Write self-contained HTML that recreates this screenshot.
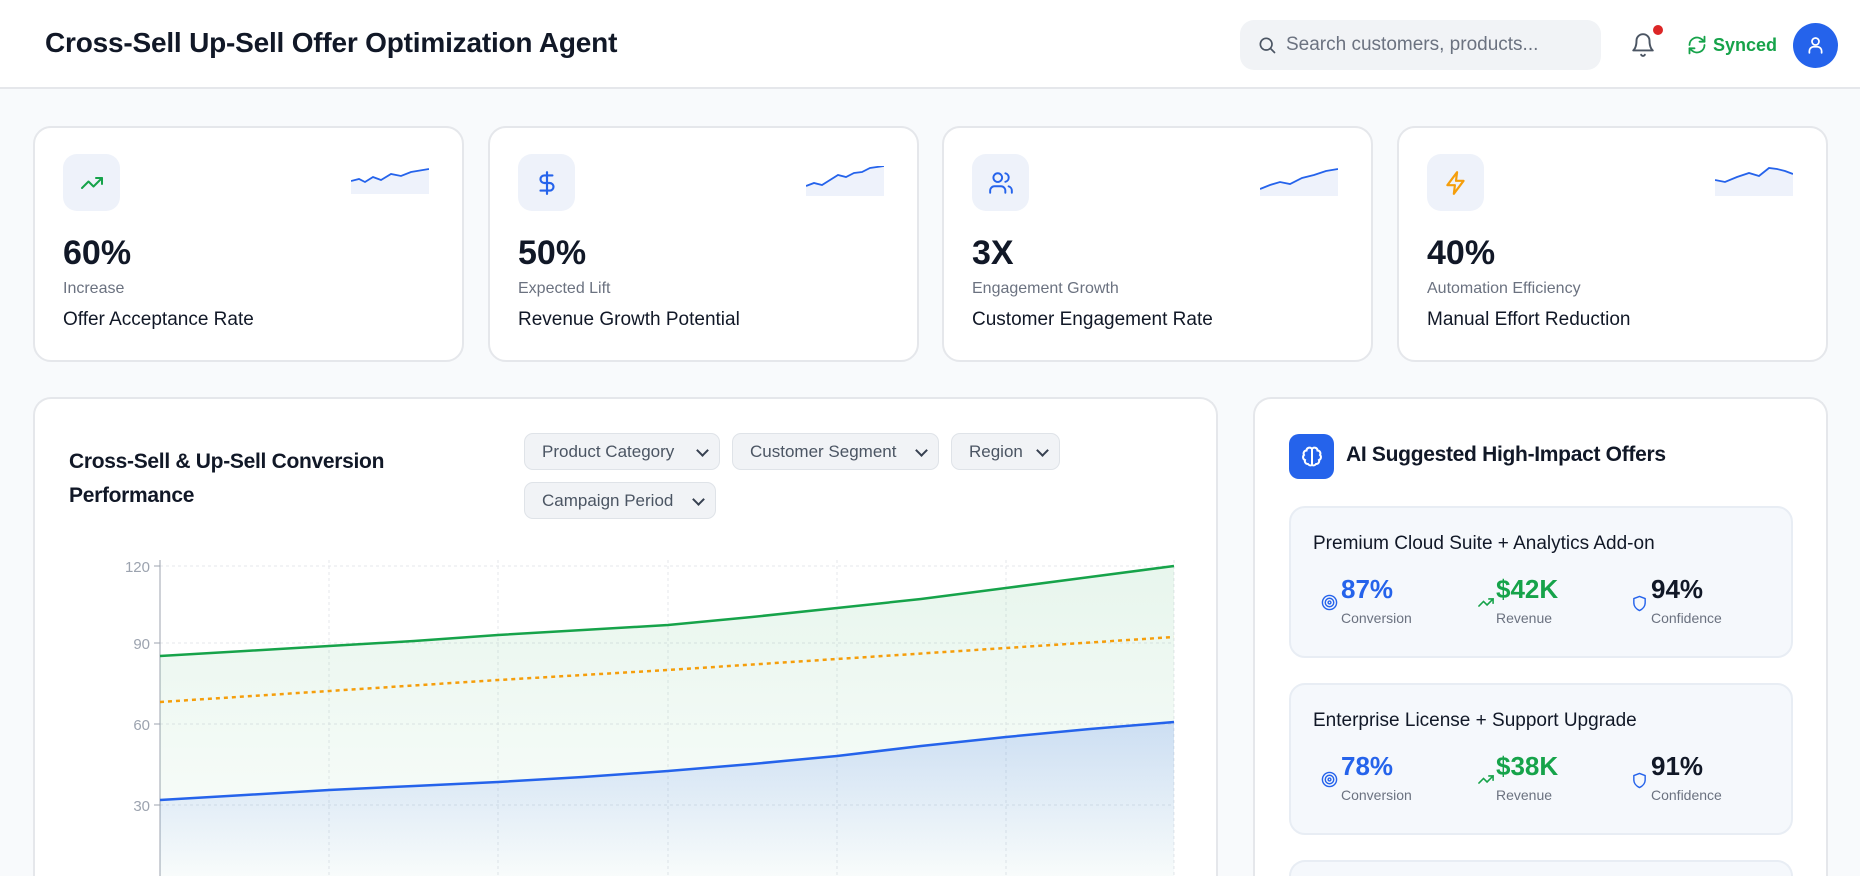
<!DOCTYPE html>
<html style="overflow:hidden;height:876px"><head><meta charset="utf-8"><style>
*{box-sizing:border-box;margin:0;padding:0}
html,body{overflow:hidden}
body{width:1860px;height:876px;background:#f8fafc;font-family:"Liberation Sans",sans-serif;color:#111827;position:relative}
#wrap{position:absolute;left:0;top:0;width:1860px;height:876px;overflow:hidden}
.hdr{position:absolute;left:0;top:0;width:1860px;height:89px;background:#fff;border-bottom:2px solid #e5e7eb}
.title{position:absolute;left:45px;top:27px;font-size:28px;font-weight:bold;color:#111827;letter-spacing:-0.2px}
.search{position:absolute;left:1240px;top:20px;width:361px;height:50px;background:#f1f3f6;border-radius:14px}
.search span{position:absolute;left:46px;top:14px;font-size:19px;color:#6b7280}
.card{position:absolute;background:#fff;border:2px solid #e5e7eb;border-radius:18px}
.kpi{top:126px;width:431px;height:236px}
.ib{position:absolute;left:28px;top:26px;width:57px;height:57px;border-radius:14px;background:#eef2fa;display:flex;align-items:center;justify-content:center}
.num{position:absolute;left:28px;top:106px;font-size:34px;font-weight:bold;color:#111827}
.sub{position:absolute;left:28px;top:152px;font-size:16px;color:#6b7280}
.lab{position:absolute;left:28px;top:181px;font-size:19px;color:#111827}
.spark{position:absolute;left:316px;top:38px}
.dd{position:absolute;height:37px;background:#f1f3f6;border:1px solid #dfe3e8;border-radius:9px;font-size:17px;color:#4b5563;padding:8px 0 0 17px}
.dd:after{content:"";position:absolute;right:12px;top:12px;width:7px;height:7px;border-right:2px solid #374151;border-bottom:2px solid #374151;transform:rotate(45deg)}
.offer{position:absolute;left:34px;width:504px;height:152px;background:#f5f8fc;border:2px solid #e8edf4;border-radius:16px}
.ot{position:absolute;left:22px;top:25px;font-size:19px;color:#111827}
.st{position:absolute;top:66px}
.st b{position:absolute;left:20px;top:0;font-size:26px;white-space:nowrap}
.st i{position:absolute;left:20px;top:36px;font-style:normal;font-size:14px;color:#6b7280;white-space:nowrap}
.st svg{position:absolute;left:0;top:20px}
</style></head><body><div id="wrap">
<div class="hdr">
<div class="title">Cross-Sell Up-Sell Offer Optimization Agent</div>
<div class="search"><svg style="position:absolute;left:17px;top:15px" width="20" height="20" viewBox="0 0 24 24" fill="none" stroke="#4b5563" stroke-width="2" stroke-linecap="round"><circle cx="11" cy="11" r="7"/><path d="M21 21l-4.5-4.5"/></svg><span>Search customers, products...</span></div>
<svg style="position:absolute;left:1630px;top:31px" width="26" height="28" viewBox="0 0 24 24" fill="none" stroke="#4b5563" stroke-width="1.8" stroke-linecap="round" stroke-linejoin="round"><path d="M6 8a6 6 0 0 1 12 0c0 7 3 9 3 9H3s3-2 3-9"/><path d="M10.3 21a1.9 1.9 0 0 0 3.4 0"/></svg>
<div style="position:absolute;left:1653px;top:25px;width:10px;height:10px;border-radius:50%;background:#dc2626"></div>
<svg style="position:absolute;left:1687px;top:35px" width="20" height="20" viewBox="0 0 24 24" fill="none" stroke="#16a34a" stroke-width="2.2" stroke-linecap="round" stroke-linejoin="round"><path d="M21 2v6h-6"/><path d="M3 12a9 9 0 0 1 15-6.7L21 8"/><path d="M3 22v-6h6"/><path d="M21 12a9 9 0 0 1-15 6.7L3 16"/></svg>
<div style="position:absolute;left:1713px;top:35px;font-size:18px;font-weight:bold;color:#16a34a">Synced</div>
<div style="position:absolute;left:1793px;top:23px;width:45px;height:45px;border-radius:50%;background:#2563eb"></div>
<svg style="position:absolute;left:1805px;top:34px" width="21" height="22" viewBox="0 0 24 24" fill="none" stroke="#fff" stroke-width="2" stroke-linecap="round"><circle cx="12" cy="8" r="4"/><path d="M5 21v-2a5 5 0 0 1 5-5h4a5 5 0 0 1 5 5v2"/></svg>
</div>

<div class="card kpi" style="left:33px"><div class="ib"><svg width="24" height="24" viewBox="0 0 24 24" fill="none" stroke="#16a34a" stroke-width="2" stroke-linecap="round" stroke-linejoin="round"><path d="M22 7l-8.5 8.5-5-5L2 17"/><path d="M16 7h6v6"/></svg></div>
<svg class="spark" width="78" height="28" viewBox="0 0 78 28"><path d="M0 15 L8 13 L14 16 L22 11 L30 14 L40 8 L50 10 L60 6 L78 3 L78 28 L0 28Z" fill="#eef2fb"/><path d="M0 15 L8 13 L14 16 L22 11 L30 14 L40 8 L50 10 L60 6 L78 3" fill="none" stroke="#2563eb" stroke-width="1.8"/></svg>
<div class="num">60%</div><div class="sub">Increase</div><div class="lab">Offer Acceptance Rate</div></div>

<div class="card kpi" style="left:488px"><div class="ib"><svg width="26" height="28" viewBox="0 0 24 24" fill="none" stroke="#2563eb" stroke-width="2" stroke-linecap="round"><path d="M12 2v20"/><path d="M17 5H9.5a3.5 3.5 0 0 0 0 7h5a3.5 3.5 0 0 1 0 7H6"/></svg></div>
<svg class="spark" width="78" height="30" viewBox="0 0 78 30"><path d="M0 20 L8 17 L16 19 L24 14 L32 9 L40 11 L48 7 L56 6 L64 2 L78 0 L78 30 L0 30Z" fill="#eef2fb"/><path d="M0 20 L8 17 L16 19 L24 14 L32 9 L40 11 L48 7 L56 6 L64 2 L78 0" fill="none" stroke="#2563eb" stroke-width="1.8"/></svg>
<div class="num">50%</div><div class="sub">Expected Lift</div><div class="lab">Revenue Growth Potential</div></div>

<div class="card kpi" style="left:942px"><div class="ib"><svg width="26" height="26" viewBox="0 0 24 24" fill="none" stroke="#2563eb" stroke-width="1.8" stroke-linecap="round"><circle cx="9" cy="7" r="4"/><path d="M2 21v-2a4 4 0 0 1 4-4h6a4 4 0 0 1 4 4v2"/><path d="M16 3.1a4 4 0 0 1 0 7.8"/><path d="M22 21v-2a4 4 0 0 0-3-3.9"/></svg></div>
<svg class="spark" width="78" height="30" viewBox="0 0 78 30"><path d="M0 23 L10 19 L20 16 L30 18 L42 12 L54 9 L66 5 L78 3 L78 30 L0 30Z" fill="#eef2fb"/><path d="M0 23 L10 19 L20 16 L30 18 L42 12 L54 9 L66 5 L78 3" fill="none" stroke="#2563eb" stroke-width="1.8"/></svg>
<div class="num">3X</div><div class="sub">Engagement Growth</div><div class="lab">Customer Engagement Rate</div></div>

<div class="card kpi" style="left:1397px"><div class="ib"><svg width="26" height="28" viewBox="0 0 24 24" fill="none" stroke="#f59e0b" stroke-width="2" stroke-linejoin="round"><path d="M13 2L4 14h7l-1 8 9-12h-7z"/></svg></div>
<svg class="spark" width="78" height="30" viewBox="0 0 78 30"><path d="M0 14 L10 16 L22 11 L34 7 L44 10 L54 2 L62 3 L70 5 L78 8 L78 30 L0 30Z" fill="#eef2fb"/><path d="M0 14 L10 16 L22 11 L34 7 L44 10 L54 2 L62 3 L70 5 L78 8" fill="none" stroke="#2563eb" stroke-width="1.8"/></svg>
<div class="num">40%</div><div class="sub">Automation Efficiency</div><div class="lab">Manual Effort Reduction</div></div>

<div class="card" style="left:33px;top:397px;width:1185px;height:479px;border-bottom:none;border-radius:18px 18px 0 0">
<div style="position:absolute;left:34px;top:46px;font-size:21px;line-height:34px;color:#111827;font-weight:bold;letter-spacing:-0.3px">Cross-Sell &amp; Up-Sell Conversion<br>Performance</div>
<div class="dd" style="left:489px;top:34px;width:196px">Product Category</div>
<div class="dd" style="left:697px;top:34px;width:207px">Customer Segment</div>
<div class="dd" style="left:916px;top:34px;width:109px">Region</div>
<div class="dd" style="left:489px;top:83px;width:192px">Campaign Period</div>
</div>

<svg style="position:absolute;left:0;top:0" width="1230" height="876">
<defs>
<linearGradient id="gg" x1="0" y1="0" x2="0" y2="1"><stop offset="0" stop-color="#16a34a" stop-opacity=".1"/><stop offset="1" stop-color="#16a34a" stop-opacity=".02"/></linearGradient>
<linearGradient id="bg" x1="0" y1="0" x2="0" y2="1"><stop offset="0" stop-color="#2563eb" stop-opacity=".18"/><stop offset="1" stop-color="#2563eb" stop-opacity=".01"/></linearGradient>
</defs>
<g stroke="#e5e7eb" stroke-width="1" stroke-dasharray="3 3">
<path d="M160 566H1174M160 643H1174M160 724H1174M160 805H1174"/>
<path d="M329 560V876M498 560V876M668 560V876M837 560V876M1006 560V876M1174 560V876"/>
</g>
<path d="M160 560V876" stroke="#9ca3af" stroke-width="1"/>
<path d="M154 566H160M154 643H160M154 724H160M154 805H160" stroke="#9ca3af"/>
<g font-size="15" fill="#9ca3af" text-anchor="end"><text x="150" y="572">120</text><text x="150" y="649">90</text><text x="150" y="730">60</text><text x="150" y="811">30</text></g>
<path d="M160 656 L245 651 L329 646 L414 641 L498 635 L583 630 L668 625 L752 617 L837 608 L921 599 L1006 588 L1090 577 L1174 566 L1174 876 L160 876Z" fill="url(#gg)"/>
<path d="M160 800 L245 795 L329 790 L414 786 L498 782 L583 777 L668 771 L752 764 L837 756 L921 746 L1006 737 L1090 729 L1174 722 L1174 876 L160 876Z" fill="url(#bg)"/>
<polyline points="160,656 245,651 329,646 414,641 498,635 583,630 668,625 752,617 837,608 921,599 1006,588 1090,577 1174,566" fill="none" stroke="#16a34a" stroke-width="2.5" stroke-linejoin="round"/>
<path d="M160 702 L329 691 L498 680 L668 670 L837 659 L1006 648 L1174 637" fill="none" stroke="#f59e0b" stroke-width="2.5" stroke-dasharray="4 4"/>
<polyline points="160,800 245,795 329,790 414,786 498,782 583,777 668,771 752,764 837,756 921,746 1006,737 1090,729 1174,722" fill="none" stroke="#2563eb" stroke-width="2.5" stroke-linejoin="round"/>
</svg>

<div class="card" style="left:1253px;top:397px;width:575px;height:479px;border-bottom:none;border-radius:18px 18px 0 0">
<div style="position:absolute;left:34px;top:35px;width:45px;height:45px;border-radius:10px;background:#2563eb;display:flex;align-items:center;justify-content:center"><svg width="24" height="24" viewBox="0 0 24 24" fill="none" stroke="#fff" stroke-width="2" stroke-linecap="round"><path d="M12 4a3 3 0 0 0-5.5 1.5A3 3 0 0 0 4 10a3 3 0 0 0 1 5 3 3 0 0 0 3 4 3 3 0 0 0 4 1z"/><path d="M12 4a3 3 0 0 1 5.5 1.5A3 3 0 0 1 20 10a3 3 0 0 1-1 5 3 3 0 0 1-3 4 3 3 0 0 1-4 1z"/><path d="M12 4v16"/></svg></div>
<div style="position:absolute;left:91px;top:44px;font-size:21px;font-weight:bold;letter-spacing:-0.3px;color:#111827">AI Suggested High-Impact Offers</div>
<div class="offer" style="top:107px"><div class="ot">Premium Cloud Suite + Analytics Add-on</div>
<div class="st" style="left:30px"><svg width="17" height="17" viewBox="0 0 24 24" fill="none" stroke="#2563eb" stroke-width="2"><circle cx="12" cy="12" r="10"/><circle cx="12" cy="12" r="6"/><circle cx="12" cy="12" r="2"/></svg><b style="color:#2563eb">87%</b><i>Conversion</i></div>
<div class="st" style="left:185px"><svg width="20" height="17" viewBox="0 0 24 24" fill="none" stroke="#16a34a" stroke-width="2.2" stroke-linecap="round"><path d="M22 7l-8.5 8.5-5-5L2 17"/><path d="M16 7h6v6"/></svg><b style="color:#16a34a">$42K</b><i>Revenue</i></div>
<div class="st" style="left:340px"><svg width="17" height="19" viewBox="0 0 24 24" fill="none" stroke="#2563eb" stroke-width="2" stroke-linejoin="round"><path d="M12 2l8 3v6c0 5-3.5 9-8 11-4.5-2-8-6-8-11V5z"/></svg><b style="color:#111827">94%</b><i>Confidence</i></div></div>
<div class="offer" style="top:284px"><div class="ot">Enterprise License + Support Upgrade</div>
<div class="st" style="left:30px"><svg width="17" height="17" viewBox="0 0 24 24" fill="none" stroke="#2563eb" stroke-width="2"><circle cx="12" cy="12" r="10"/><circle cx="12" cy="12" r="6"/><circle cx="12" cy="12" r="2"/></svg><b style="color:#2563eb">78%</b><i>Conversion</i></div>
<div class="st" style="left:185px"><svg width="20" height="17" viewBox="0 0 24 24" fill="none" stroke="#16a34a" stroke-width="2.2" stroke-linecap="round"><path d="M22 7l-8.5 8.5-5-5L2 17"/><path d="M16 7h6v6"/></svg><b style="color:#16a34a">$38K</b><i>Revenue</i></div>
<div class="st" style="left:340px"><svg width="17" height="19" viewBox="0 0 24 24" fill="none" stroke="#2563eb" stroke-width="2" stroke-linejoin="round"><path d="M12 2l8 3v6c0 5-3.5 9-8 11-4.5-2-8-6-8-11V5z"/></svg><b style="color:#111827">91%</b><i>Confidence</i></div></div>
<div class="offer" style="top:461px;height:18px;border-bottom:none;border-radius:16px 16px 0 0"></div>
</div>
</div></body></html>
